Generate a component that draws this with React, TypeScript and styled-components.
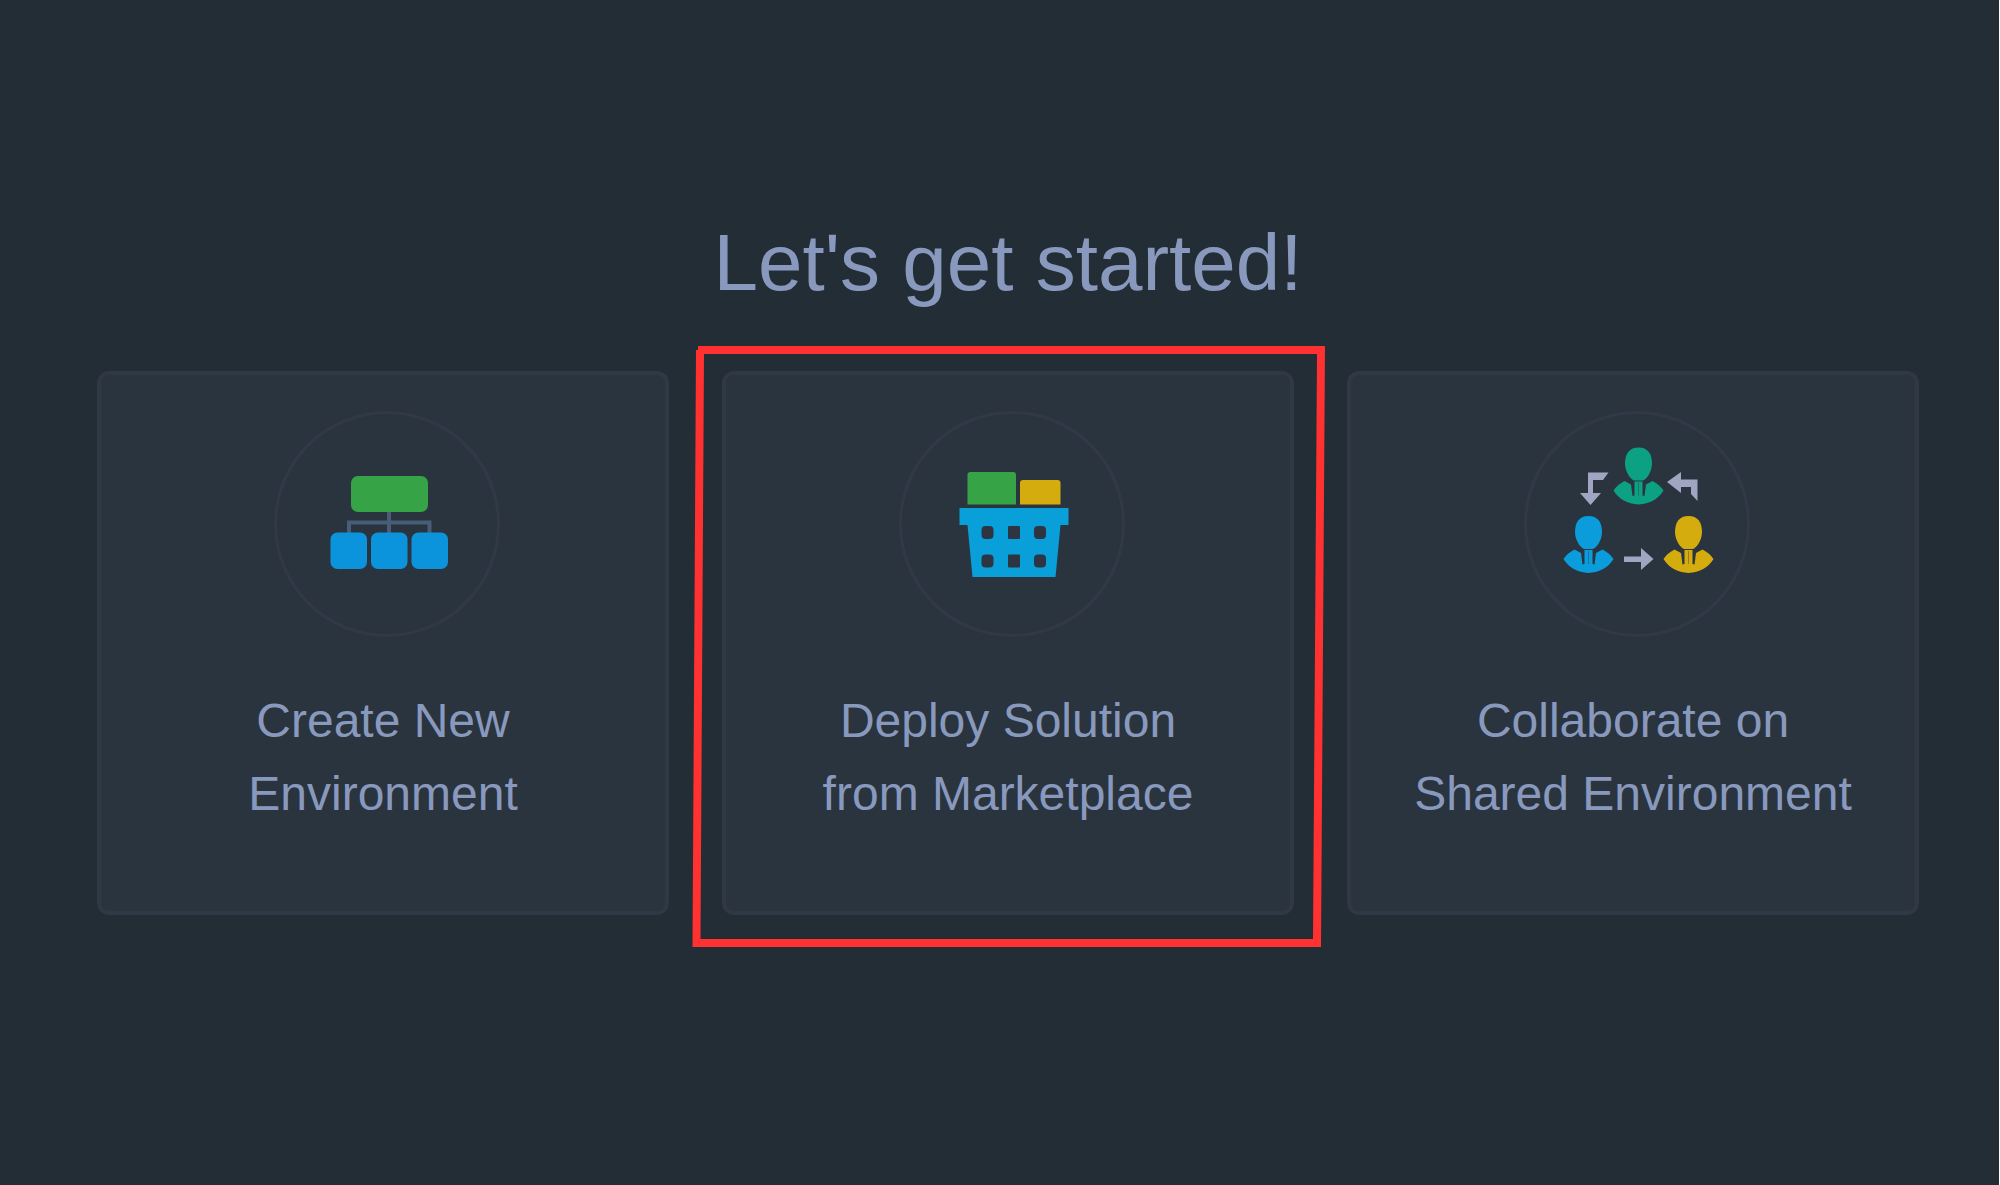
import React from "react";
import styled, { createGlobalStyle } from "styled-components";

const GlobalStyle = createGlobalStyle`
  *, *::before, *::after { box-sizing: border-box; }
  body {
    margin: 0;
    background: #232d36;
    color: #8999bd;
    font-family: "Liberation Sans", Arial, sans-serif;
  }
`;

const Page = styled.main`
  min-height: 100vh;
  padding: 217px 80px 80px 97px;
  border-right: 1px solid #ffffff;
  background: #232d36;
`;

const Title = styled.h1`
  margin: 0 0 62px;
  font-size: 80px;
  line-height: 92px;
  font-weight: 400;
  text-align: center;
`;

const CardList = styled.ul`
  display: grid;
  grid-template-columns: repeat(3, minmax(0, 1fr));
  gap: 53px;
  margin: 0;
  padding: 0;
  list-style: none;
`;

const CardItem = styled.li`
  position: relative;
  display: flex;
`;

const Card = styled.button`
  flex: 1;
  display: flex;
  flex-direction: column;
  align-items: center;
  gap: 47px;
  padding: 36px 0 81px;
  border: 4px solid #303745;
  border-radius: 12px;
  background: #2a343f;
  color: inherit;
  font: inherit;
  cursor: pointer;
`;

const IconRing = styled.span`
  display: flex;
  width: 226px;
  height: 226px;
  margin-left: 8px;
  border: 3px solid #333848;
  border-radius: 50%;

  svg {
    flex: none;
    width: 226px;
    height: 226px;
    margin: -3px;
  }
`;

const CardLabel = styled.span`
  font-size: 48px;
  line-height: 73px;
  text-align: center;
  white-space: pre-line;
`;

const Marker = styled.svg`
  position: absolute;
  top: -25px;
  left: -30px;
  width: calc(100% + 61px);
  height: calc(100% + 57px);
  pointer-events: none;
`;

const EnvironmentIcon = () => (
  <svg viewBox="0 0 226 226" aria-hidden="true">
    <path
      d="M115 100V122M75 122V111.500H155.500V122"
      fill="none"
      stroke="#475d78"
      strokeWidth="4"
    />
    <rect x="77" y="65" width="77" height="36" rx="7" fill="#36a446" />
    <g fill="#0b93dc">
      <rect x="56.500" y="121.500" width="36.500" height="36.500" rx="7" />
      <rect x="97" y="121.500" width="36.500" height="36.500" rx="7" />
      <rect x="137.500" y="121.500" width="36.500" height="36.500" rx="7" />
    </g>
  </svg>
);

const BasketIcon = () => (
  <svg viewBox="0 0 226 226" aria-hidden="true">
    <path d="M68.500 93.500V64q0-3 3-3H114q3 0 3 3V93.500Z" fill="#36a446" />
    <path d="M121 93.500V72q0-3 3-3H158.500q3 0 3 3V93.500Z" fill="#d4ac0d" />
    <path d="M60.500 97H169.500V114H161.500L156.500 166H73.500L68.500 114H60.500Z" fill="#09a0da" />
    <g fill="#2d3542">
      {[115, 143.5].map((y) =>
        [82.5, 109, 135].map((x) => (
          <rect
            key={`${x}-${y}`}
            x={x}
            y={y}
            width="12"
            height="13"
            rx={x === 109 ? 1 : 4}
          />
        ))
      )}
    </g>
  </svg>
);

const Person = ({ x, y, color }: { x: number; y: number; color: string }) => (
  <g transform={`translate(${x} ${y})`} fill={color}>
    <path d="M0-29C9-29 13.500-23 13.500-13C13.500-4 7 4 4 4H-4C-7 4-13.500-4-13.500-13C-13.500-23-9-29 0-29Z" />
    <path d="M-14 4.500Q-21 8-25 14Q-17 27 0 28Q17 27 25 14Q21 8 14 4.500L7.500 8L6 19.500L4 19V5H-4V19L-6 19.500L-7.500 8Z" />
    <path d="M0 6V19" stroke="#2a343f" strokeWidth="1" opacity="0.4" />
  </g>
);

const CollaborateIcon = () => (
  <svg viewBox="0 0 226 226" aria-hidden="true">
    <Person x={114.5} y={65.5} color="#0ba182" />
    <Person x={64.5} y={134} color="#0a9cdb" />
    <Person x={164.5} y={134} color="#d4ac0d" />
    <g fill="#a0a6c2">
      <path d="M64 61.500H84.500L79 69H69V82H77L66.500 94L56 82H64Z" />
      <path d="M143 71L157 61V68.500H173.500V90L167 83V76H157V82Z" />
      <path d="M100 145.500H117V137L129.500 148L117 159V151H100Z" />
    </g>
  </svg>
);

interface Option {
  label: string;
  icon: React.ReactNode;
  marked?: boolean;
}

const options: Option[] = [
  { label: "Create New\nEnvironment", icon: <EnvironmentIcon /> },
  { label: "Deploy Solution\nfrom Marketplace", icon: <BasketIcon />, marked: true },
  { label: "Collaborate on\nShared Environment", icon: <CollaborateIcon /> },
];

export default function App() {
  return (
    <>
      <GlobalStyle />
      <Page>
        <Title>Let's get started!</Title>
        <CardList>
          {options.map(({ label, icon, marked }) => (
            <CardItem key={label}>
              <Card type="button">
                <IconRing>{icon}</IconRing>
                <CardLabel>{label}</CardLabel>
              </Card>
              {marked && (
                <Marker viewBox="0 0 633 601" preserveAspectRatio="none" aria-hidden="true">
                  <path
                    fill="#ff3131"
                    fillRule="evenodd"
                    d="M6 0H633L629 601H0.500L4 4H6ZM12 8L8.500 593H621L625 8Z"
                  />
                </Marker>
              )}
            </CardItem>
          ))}
        </CardList>
      </Page>
    </>
  );
}
